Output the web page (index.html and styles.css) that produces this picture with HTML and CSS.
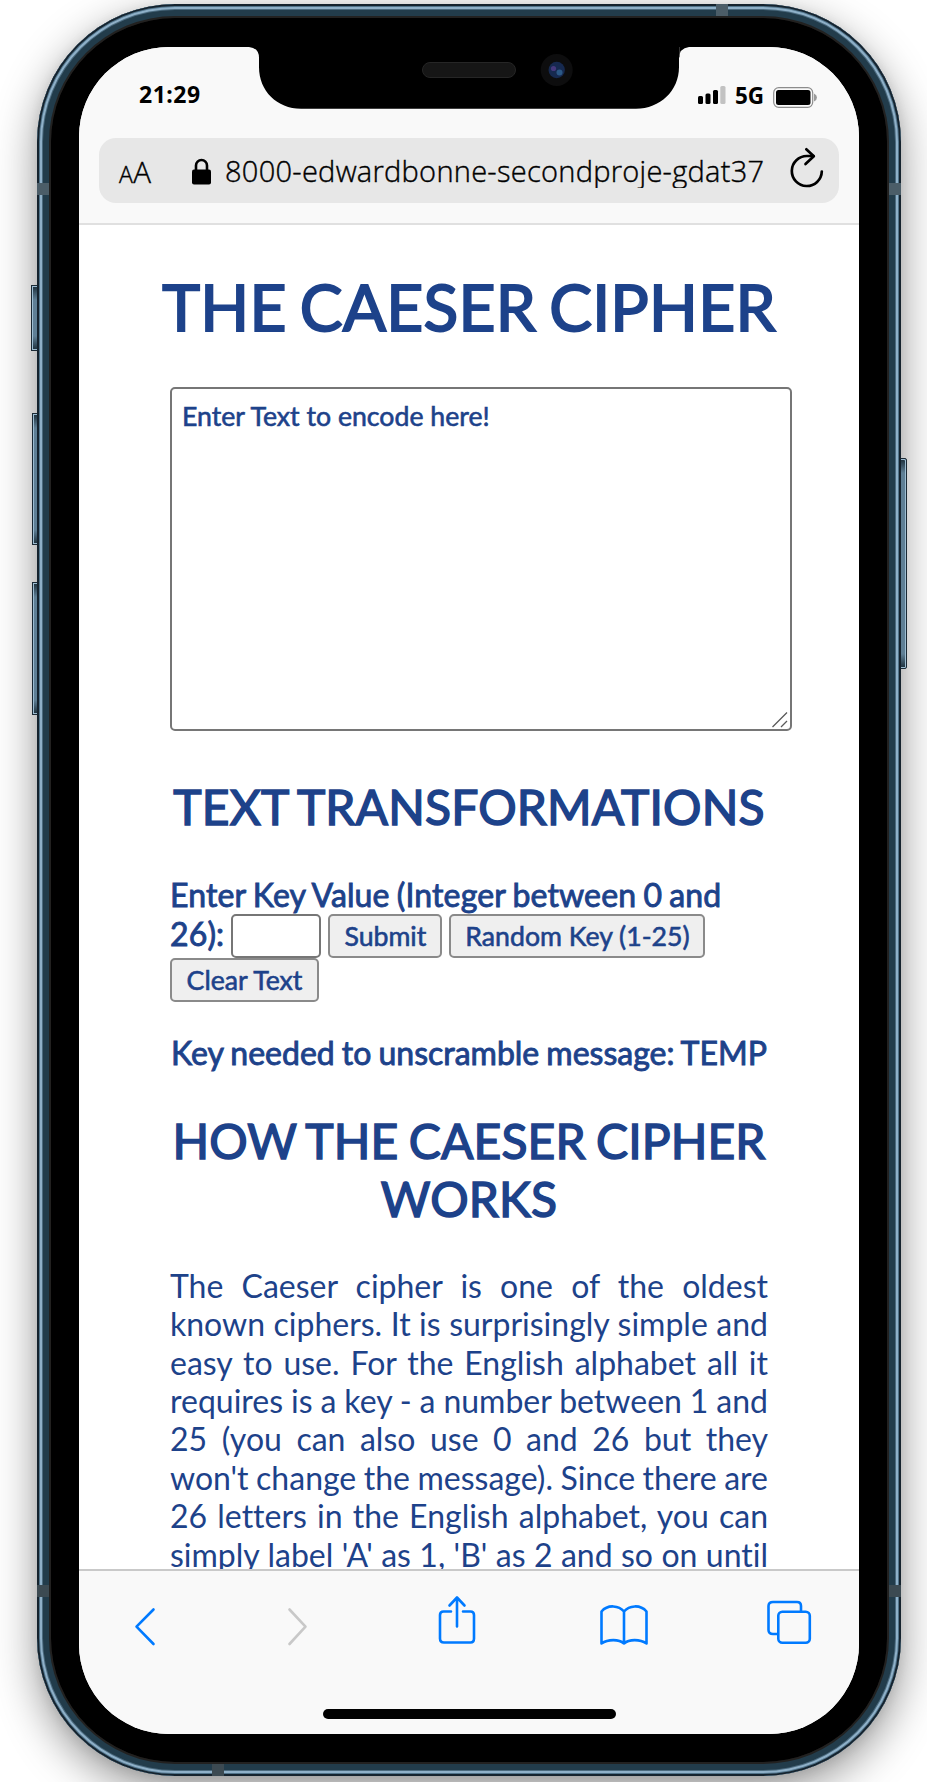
FILE: index.html
```html
<!DOCTYPE html>
<html lang="en">
<head>
<meta charset="utf-8">
<title>The Caeser Cipher</title>
<link rel="stylesheet" href="styles.css">
</head>
<body>
<div class="device">
  <span class="key key-mute"></span>
  <span class="key key-up"></span>
  <span class="key key-down"></span>
  <span class="key key-power"></span>
  <div class="frame">
    <span class="band band-lt"></span><span class="band band-rt"></span>
    <span class="band band-lb"></span><span class="band band-rb"></span>
    <span class="band band-top"></span><span class="band band-bottom"></span>
    <div class="bezel">
      <svg class="notch" width="440" height="62" viewBox="0 0 440 62">
        <path d="M0 0Q10 1 10 11V20C10 44 28 61.700 52 61.700H387C411 61.700 430 44 430 20V12Q430 1 440 0Z" fill="#000"/>
        <path d="M430.500 0V10" stroke="#555" stroke-width=".6"/>
        <rect x="173.500" y="15.500" width="93" height="15" rx="7.500" fill="#161616" stroke="#262626"/>
        <circle cx="307.700" cy="23" r="16" fill="#0d0d0e"/>
        <circle cx="307.700" cy="23" r="8.200" fill="#16294f"/>
        <circle cx="304.500" cy="21.500" r="2.600" fill="#45387c"/>
        <circle cx="310.500" cy="25.500" r="3" fill="#2b5886"/>
      </svg>
      <div class="screen">
        <header class="chrome">
          <div class="status">
            <span class="time">21:29</span>
            <span class="indicators">
              <svg width="28" height="19" viewBox="0 0 28 19">
                <rect x="0" y="10" width="5" height="8" rx="1.500"/>
                <rect x="7.500" y="7.500" width="5" height="10.500" rx="1.500"/>
                <rect x="15" y="4" width="5" height="14" rx="1.500"/>
                <rect x="22.300" y="0" width="5.200" height="18" rx="1.500" fill="#c2c2c2"/>
              </svg>
              <span class="net">5G</span>
              <svg class="battery" width="44" height="21" viewBox="0 0 44 21">
                <rect x=".7" y=".7" width="39" height="19.600" rx="5" fill="none" stroke="#8c8c8c" stroke-width="1.200"/>
                <rect x="3" y="3" width="34.500" height="15" rx="2.500"/>
                <path d="M41 6.500Q44 8 44 10.500T41 14.500Z" fill="#9a9a9a"/>
              </svg>
            </span>
          </div>
          <div class="address">
            <span class="aa"><small>A</small>A</span>
            <svg class="lock" width="19" height="27" viewBox="0 0 19 27">
              <path d="M4 12V7.500a5.500 5.500 0 0 1 11 0V12" fill="none" stroke="#000" stroke-width="2.600"/>
              <rect x="0" y="11.500" width="19" height="15" rx="2"/>
            </svg>
            <span class="url">8000-edwardbonne-secondproje-gdat37</span>
            <svg class="reload" width="34" height="42" viewBox="0 0 34 42" fill="none" stroke="#000" stroke-width="2.700" stroke-linecap="round" stroke-linejoin="round">
              <path d="M31.800 24.500A15 15 0 1 1 17 9H23.500"/>
              <path d="M16.300 2.300L23.800 9.300L15.500 17"/>
            </svg>
          </div>
        </header>
        <main class="page">
          <h1 class="title">THE CAESER CIPHER</h1>
          <div class="editor">
            <textarea class="message" spellcheck="false">Enter Text to encode here!</textarea>
            <svg class="grip" width="16" height="16" viewBox="0 0 16 16" stroke="#5a5a5a" stroke-width="1.300"><path d="M.5 15L15 .5M9 15L15 9"/></svg>
          </div>
          <h2 class="heading">TEXT TRANSFORMATIONS</h2>
          <div class="form">
            <label class="strong" for="key">Enter Key Value (Integer between 0 and 26):</label>
            <input class="keyfield" id="key" type="text">
            <button class="btn submit">Submit</button>
            <button class="btn random">Random Key (1-25)</button>
            <button class="btn clear">Clear Text</button>
          </div>
          <p class="strong result">Key needed to unscramble message: TEMP</p>
          <h2 class="heading">HOW THE CAESER CIPHER WORKS</h2>
          <p class="copy">The Caeser cipher is one of the oldest known ciphers. It is surprisingly simple and easy to use. For the English alphabet all it requires is a key - a number between 1 and 25 (you can also use 0 and 26 but they won't change the message). Since there are 26 letters in the English alphabet, you can simply label 'A' as 1, 'B' as 2 and so on until</p>
        </main>
        <footer class="toolbar">
          <nav class="actions">
            <svg class="back" width="22" height="40" viewBox="0 0 22 40"><path d="M19.500 2.500L2.500 19.700L19.500 37"/></svg>
            <svg class="forward" width="22" height="40" viewBox="0 0 22 40"><path d="M2.500 2.500L18.500 19.700L2.500 37"/></svg>
            <svg class="share" width="40" height="50" viewBox="0 0 40 50"><path d="M14 16.500H6.500Q3 16.500 3 20V43.500Q3 47.500 7 47.500H33.500Q37 47.500 37 43.500V20Q37 16.500 33.500 16.500H26M20 31.500V3M12.500 10.500L20 2.500L27.500 10.500"/></svg>
            <svg class="book" width="50" height="44" viewBox="0 0 50 44"><path d="M25 8.500C20 2.500 9 1 2.500 8.500V40.500C9 36 20 36 25 40.500C30 36 41 36 47.500 40.500V8.500C41 1 30 2.500 25 8.500V40.500"/></svg>
            <svg class="tabs" width="46" height="46" viewBox="0 0 46 46"><path d="M11.500 35H7Q2.500 35 2.500 31V7Q2.500 3 7 3H31Q35 3 35 7V12"/><rect x="12.300" y="12.700" width="31.500" height="31" rx="4"/></svg>
          </nav>
          <div class="home"></div>
        </footer>
      </div>
    </div>
  </div>
</div>
</body>
</html>
```
FILE: styles.css
```css
* { box-sizing: border-box; }
body { margin: 0; height: 1782px; overflow: hidden; background: #fff; font-family: Lato, sans-serif; font-variant-ligatures: none; }
svg { display: block; flex: none; }

/* Phone body */
.device { position: relative; width: 864px; height: 1772px; margin: 4px 0 0 37px; border-radius: 138px; box-shadow: 0 14px 44px rgba(0,0,0,.42), 0 2px 12px rgba(0,0,0,.08); }
.frame { position: relative; height: 100%; padding: 14px; border-radius: 138px; overflow: hidden; background: #111; }
.frame::after { content: ""; position: absolute; inset: 0; border-radius: 138px; pointer-events: none; box-shadow: inset 0 0 0 2px #15232e, inset 0 0 0 3px #50738a, inset 0 0 0 5px #8fb0c8, inset 0 0 0 6px #4b6a7e, inset 0 0 0 12px #223c4b, inset 0 0 0 14px #222120; }
.bezel { position: relative; height: 100%; padding: 29px 28px 28px; border-radius: 124px; background: #000; }
.notch { position: absolute; z-index: 2; left: 198px; top: 29px; }
.band { position: absolute; z-index: 3; width: 12px; height: 12px; background: #4b5d68; }
.band-lt { left: 0; top: 179px; }
.band-rt { right: 0; top: 179px; }
.band-lb { left: 0; bottom: 179px; background: #3c4a52; }
.band-rb { right: 0; bottom: 179px; background: #3c4a52; }
.band-top { left: 679px; top: 0; }
.band-bottom { left: 175px; bottom: 0; background: #3c4a52; }
.key { position: absolute; left: -5px; width: 7px; border: 1px solid #1a2934; background: linear-gradient(#1c2f3b, #5f7f95 14px, #5f7f95 calc(100% - 14px), #1c2f3b); box-shadow: inset 1px 1px 0 #9dbdd2, inset 0 -1px 0 #9dbdd2; }
.key-mute { left: -6px; top: 281px; height: 66px; }
.key-up { top: 409px; height: 132px; }
.key-down { top: 578px; height: 133px; }
.key-power { left: auto; right: -6px; top: 454px; height: 211px; border-radius: 0 2px 2px 0; box-shadow: inset -1px 1px 0 #9dbdd2, inset 0 -1px 0 #9dbdd2; }

/* Browser chrome */
.screen { display: flex; flex-direction: column; height: 1687px; border-radius: 90px; overflow: hidden; background: #fff; color: #1d428a; }
.chrome { flex: none; height: 178px; padding: 0 20px; border-bottom: 2px solid #e0e0e0; background: #f9f9f9; color: #000; font-family: "Open Sans", "Noto Sans", sans-serif; }
.status { display: flex; justify-content: space-between; height: 91px; padding: 33px 22px 0 40px; }
.time { font: 700 23px/30px "Noto Sans", sans-serif; letter-spacing: .5px; margin-top: -1px; }
.indicators { display: flex; padding-top: 6px; }
.net { margin: -5px 0 0 9px; width: 31px; font: 700 22.500px/30px "Noto Sans", sans-serif; }
.battery { margin: 1px 0 0 7px; }
.address { display: flex; height: 65px; border-radius: 17px; background: #e7e7e7; padding-left: 20px; }
.aa { width: 73px; padding-top: 11px; font: 300 29.500px/46px "Open Sans", sans-serif; letter-spacing: .5px; -webkit-text-stroke: .4px #000; }
.aa small { font-size: 23px; }
.lock { margin-top: 20px; }
.url { width: 541px; height: 50px; margin-left: 14px; overflow: hidden; white-space: nowrap; padding-top: 9px; font-size: 29px; font-weight: 300; letter-spacing: .27px; line-height: 48px; -webkit-text-stroke: .4px #000; }
.reload { margin: 9px 0 0 24px; }

/* Page */
.page { flex: none; height: 1344px; padding: 0 91px; overflow: hidden; }
.title { width: 640px; margin: 43px -21px 42px; text-align: center; font-size: 64px; line-height: 77px; font-weight: 400; word-spacing: -3.500px; letter-spacing: .25px; -webkit-text-stroke: 2px #1d428a; }
.editor { position: relative; width: 622px; height: 344px; }
.message { display: block; width: 622px; height: 344px; margin: 0; padding: 11px 10px; resize: none; outline: 0; border: 2px solid #767676; border-radius: 5px; background: #fff; color: #1d428a; font: 400 26.667px/32px Lato, sans-serif; -webkit-text-stroke: .6px #1d428a; }
.grip { position: absolute; right: 4px; bottom: 3px; }
.heading { margin: 0; text-align: center; font-size: 48px; line-height: 57.600px; font-weight: 400; padding: 47px 0 40px; word-spacing: -2.200px; letter-spacing: .15px; -webkit-text-stroke: 1.500px #1d428a; }
.form { height: 127px; font-size: 32px; line-height: 38.400px; word-spacing: -1.100px; }
.strong { font-size: 32px; line-height: 38.400px; word-spacing: -1.100px; -webkit-text-stroke: .9px #1d428a; }
.form .strong { word-spacing: -1.100px; letter-spacing: .130px; }
.keyfield { width: 90px; height: 44px; margin: 0; padding: 2px 4px; border: 2px solid #767676; border-radius: 5px; font: 400 26.667px/32px Lato, sans-serif; }
.btn { height: 44px; margin: 0; padding: 2px 0; border: 2px solid #8a8a8a; border-radius: 5px; background: #efefef; color: #1d428a; font: 400 26.667px/32px Lato, sans-serif; -webkit-text-stroke: .6px #1d428a; white-space: nowrap; }
.submit { width: 114px; }
.random { width: 256px; }
.clear { width: 149px; }
.result { margin: 31px -10px 0; text-align: center; white-space: nowrap; }
.result + .heading { padding-top: 40px; padding-bottom: 39.500px; }
.copy { margin: 0; font-size: 32px; line-height: 38.400px; word-spacing: -2px; text-align: justify; text-align-last: justify; }

/* Bottom toolbar */
.toolbar { flex: 1; border-top: 2px solid #c9c9c9; background: #f9f9f9; }
.actions { display: flex; height: 138px; padding-left: 55px; fill: none; stroke: #007aff; stroke-width: 2.600; stroke-linecap: round; stroke-linejoin: round; }
.back { margin-top: 36px; }
.forward { margin: 36px 0 0 131px; stroke: #c8c8c8; }
.share { margin: 24px 0 0 128px; }
.book { margin: 32px 0 0 122px; }
.tabs { margin: 28px 0 0 117px; }
.home { width: 293px; height: 10px; margin-left: 244px; border-radius: 5px; background: #000; }
```
